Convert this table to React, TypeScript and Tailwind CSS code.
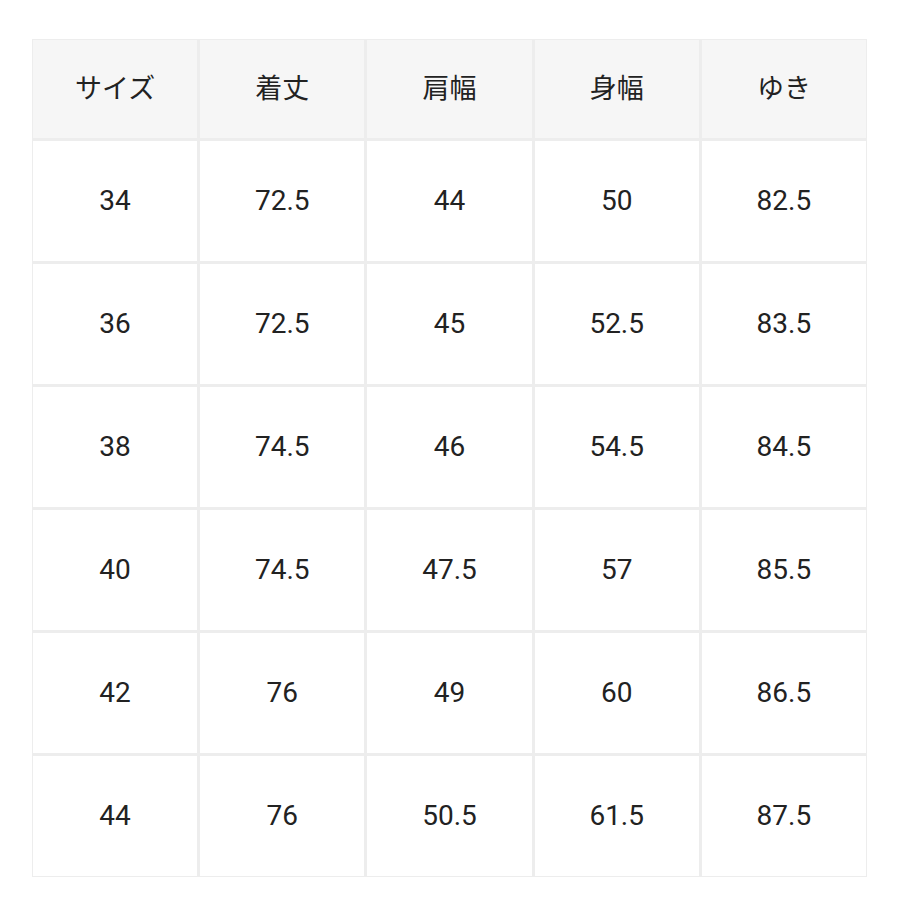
const HEADERS = ["サイズ", "着丈", "肩幅", "身幅", "ゆき"]

const ROWS = [
  ["34", "72.5", "44", "50", "82.5"],
  ["36", "72.5", "45", "52.5", "83.5"],
  ["38", "74.5", "46", "54.5", "84.5"],
  ["40", "74.5", "47.5", "57", "85.5"],
  ["42", "76", "49", "60", "86.5"],
  ["44", "76", "50.5", "61.5", "87.5"],
]

export default function App() {
  return (
    <div
      className="h-[900px] w-[900px] bg-white pl-[32px] pt-[39px]"
      style={{ fontFamily: 'Roboto, "Noto Sans CJK JP", sans-serif' }}
    >
      <div className="grid w-[835px] grid-cols-5 gap-[3px] bg-[#ededed] p-[1px]">
        {HEADERS.map((h) => (
          <div
            key={h}
            className="flex h-[98px] items-center justify-center bg-[#f6f6f6] text-[27px] text-[#222]"
          >
            {h}
          </div>
        ))}
        {ROWS.map((row, i) =>
          row.map((v, j) => (
            <div
              key={`${i}-${j}`}
              className="flex h-[120px] items-center justify-center bg-white text-[28px] text-[#222]"
            >
              {v}
            </div>
          ))
        )}
      </div>
    </div>
  )
}
